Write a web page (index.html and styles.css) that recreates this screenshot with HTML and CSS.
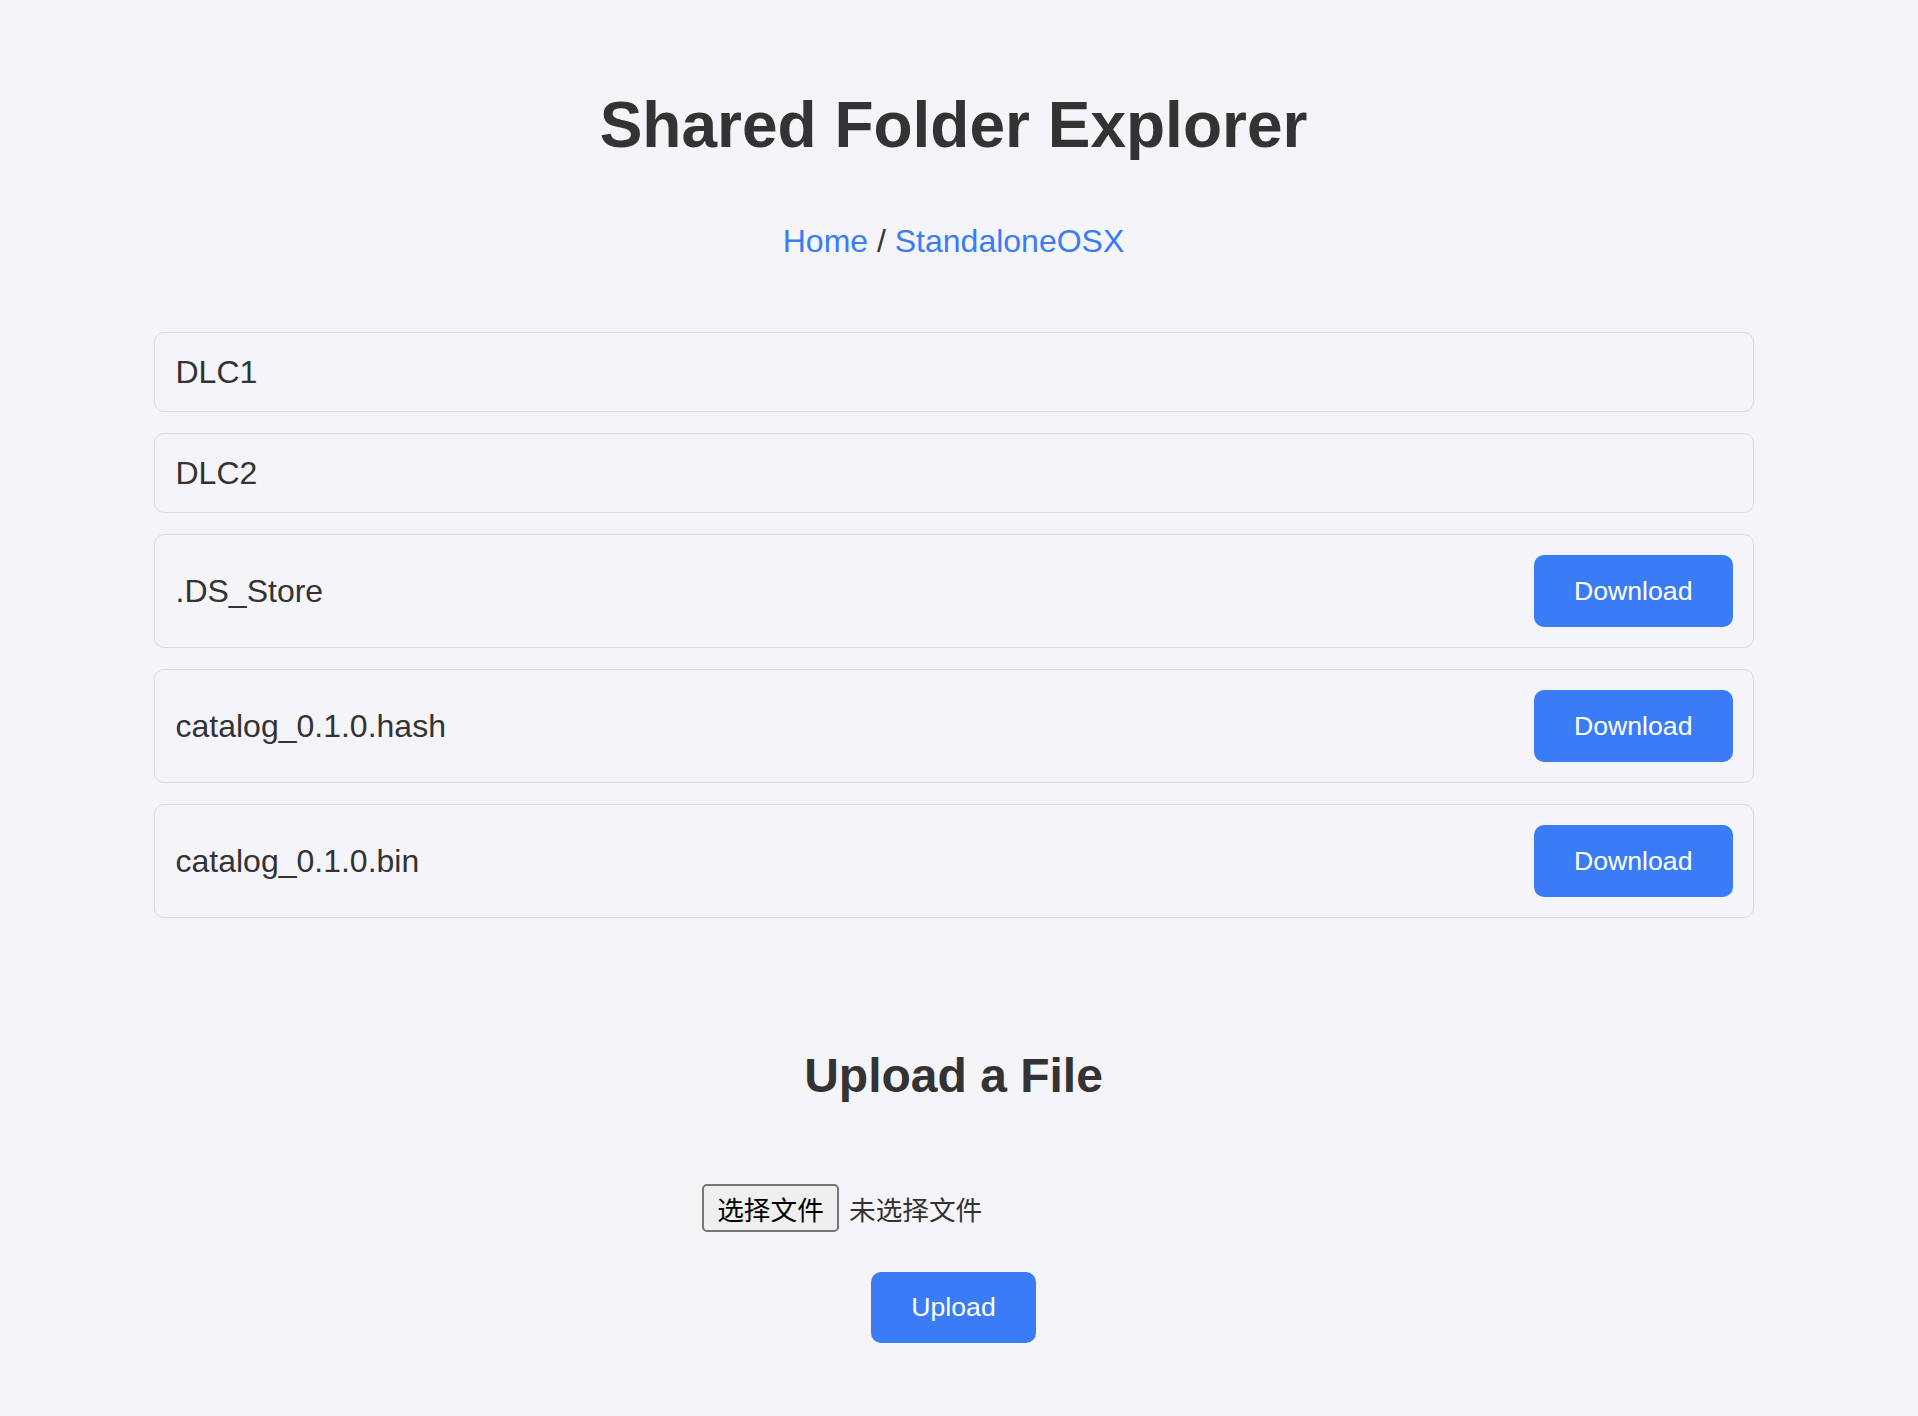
FILE: index.html
```html
<!DOCTYPE html>
<html lang="zh-CN">
<head>
<meta charset="utf-8">
<title>Shared Folder Explorer</title>
<link rel="stylesheet" href="styles.css">
</head>
<body>
<div class="page">
  <h1 class="title">Shared Folder Explorer</h1>
  <nav class="breadcrumb"><a href="#">Home</a> / <a href="#">StandaloneOSX</a></nav>

  <ul class="list">
    <li class="item"><span class="name">DLC1</span></li>
    <li class="item"><span class="name">DLC2</span></li>
    <li class="item"><span class="name">.DS_Store</span><button class="btn">Download</button></li>
    <li class="item"><span class="name">catalog_0.1.0.hash</span><button class="btn">Download</button></li>
    <li class="item"><span class="name">catalog_0.1.0.bin</span><button class="btn">Download</button></li>
  </ul>

  <section class="upload">
    <h2 class="upload-title">Upload a File</h2>
    <form class="upload-form">
      <div class="file-input">
        <span class="file-btn">选择文件</span>
        <span class="file-status">未选择文件</span>
      </div>
      <button type="button" class="btn upload-btn">Upload</button>
    </form>
  </section>
</div>
</body>
</html>
```

FILE: styles.css
```css
html {
  background: #f4f4f9;
}

body {
  margin: 0;
  padding: 0 11px 0 0;
  background: #f4f4f9;
  color: #333;
  font-family: "Liberation Sans", Arial, sans-serif;
  font-size: 32px;
}

.page {
  max-width: 1600px;
  margin: 0 auto;
  padding-bottom: 60px;
}

.title {
  margin: 88px 0 61px;
  font-size: 64px;
  font-weight: bold;
  text-align: center;
  line-height: 74px;
}

.breadcrumb {
  text-align: center;
  line-height: 37px;
  margin-bottom: 72px;
}

.breadcrumb a {
  color: #3a7cf6;
  text-decoration: none;
}

.list {
  list-style: none;
  margin: 0;
  padding: 0;
}

.item {
  display: flex;
  align-items: center;
  justify-content: space-between;
  padding: 20px 20px 20px 21px;
  border: 1px solid #dcdcdc;
  border-radius: 10px;
  margin-bottom: 21px;
  min-height: 38px;
}

.name {
  line-height: 38px;
}

.btn {
  font-family: "Liberation Sans", Arial, sans-serif;
  font-size: 26.67px;
  line-height: 32px;
  padding: 20px 40px;
  color: #fff;
  background: #3a7cf6;
  border: none;
  border-radius: 10px;
  cursor: pointer;
}

.upload {
  margin-top: 130px;
  text-align: center;
}

.upload-title {
  margin: 0;
  font-size: 48px;
  line-height: 55px;
}

.upload-form {
  display: flex;
  flex-direction: column;
  align-items: center;
  margin-top: 81px;
}

.file-input {
  width: 503px;
  height: 48px;
  display: flex;
  align-items: center;
  gap: 10px;
  font-family: "Noto Sans CJK SC", sans-serif;
  font-size: 26.67px;
}

.file-btn {
  box-sizing: border-box;
  height: 48px;
  width: 137px;
  display: flex;
  align-items: center;
  justify-content: center;
  background: #efefef;
  color: #000;
  border: 2px solid #767676;
  border-radius: 5px;
}

.file-status {
  color: #333;
}

.upload-btn {
  margin-top: 40px;
  line-height: 31px;
}
```
